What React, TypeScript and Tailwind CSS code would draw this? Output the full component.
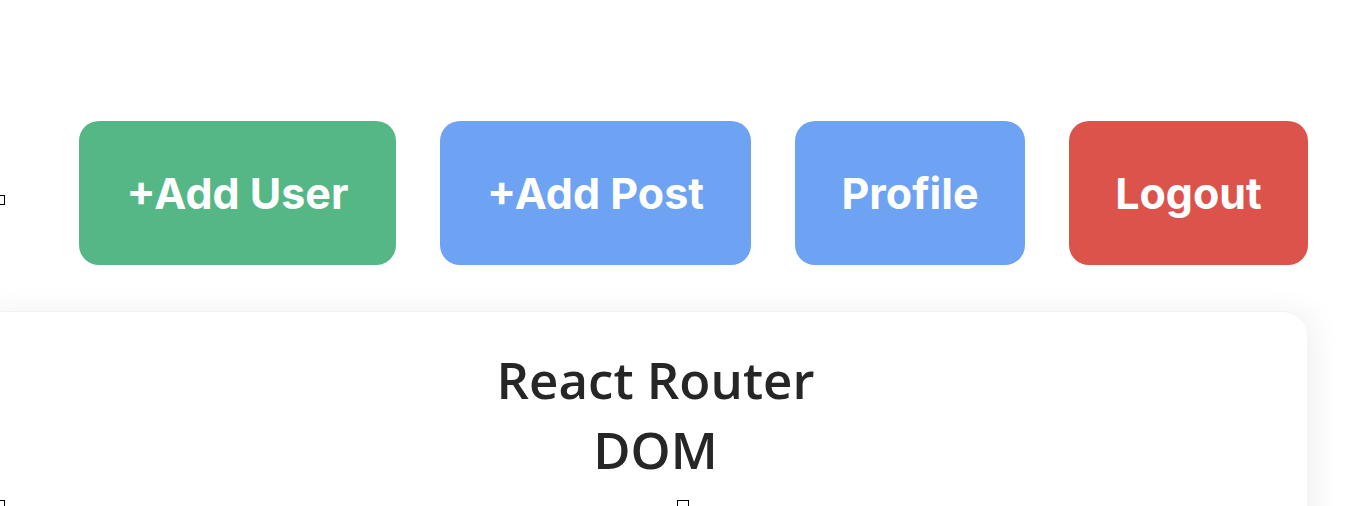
import React from 'react';

const buttons = [
  { label: '+Add User', cls: 'w-[317px] bg-[#55b686]' },
  { label: '+Add Post', cls: 'w-[311px] bg-[#6ea2f2]' },
  { label: 'Profile', cls: 'w-[230px] bg-[#6ea2f2]' },
  { label: 'Logout', cls: 'w-[239px] bg-[#dc534b]' },
];

function App() {
  return (
    <div className="relative h-[506px] w-[1360px] overflow-hidden bg-white">
      <div className="flex gap-[44px] pl-[79px] pt-[121px]">
        {buttons.map((b) => (
          <button
            key={b.label}
            className={`flex h-[144px] items-center justify-center rounded-[20px] text-[43px] font-bold text-white ${b.cls}`}
            style={{ fontFamily: 'Inter, "Liberation Sans", sans-serif' }}
          >
            {b.label}
          </button>
        ))}
      </div>

      <div className="ml-[-30px] mt-[46px] h-[300px] w-[1337px] rounded-[24px] border-t border-[#f1f1f1] bg-white pl-[34px] pt-[32px] shadow-[8px_0_30px_rgba(0,0,0,0.06)]">
        <h1
          className="mx-auto w-[420px] text-center text-[51px] font-semibold leading-[70px] text-[#262626]"
          style={{ fontFamily: '"Open Sans", "Noto Sans", sans-serif' }}
        >
          React Router DOM
        </h1>
      </div>

      {/* small marker boxes */}
      <span className="absolute left-[-3px] top-[195px] h-[10px] w-[8px] border border-black" />
      <span className="absolute left-[-4px] top-[500px] h-[10px] w-[9px] border border-black" />
      <span className="absolute left-[677px] top-[500px] h-[10px] w-[12px] border border-black" />
    </div>
  );
}

export default App;
